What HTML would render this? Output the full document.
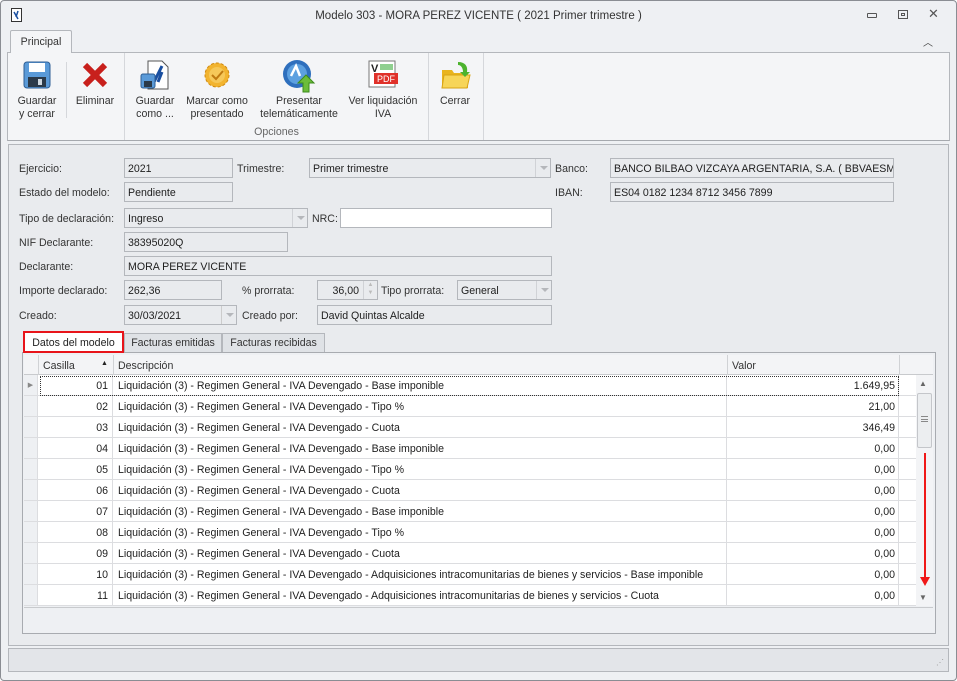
<!DOCTYPE html>
<html><head><meta charset="utf-8"><style>
*{box-sizing:border-box;margin:0;padding:0}
body{width:957px;height:681px;background:#fff;font-family:"Liberation Sans",sans-serif;font-size:10.6px;color:#1e1e1e;position:relative;overflow:hidden}
.abs{position:absolute}
.win{left:0;top:0;width:957px;height:681px;background:#eef0f3;border:1px solid #8a8d93;border-radius:4px}
.lbl{position:absolute;font-size:10.6px;color:#333}
.inp{position:absolute;height:20px;background:#e9ebee;border:1px solid #b4b7bc;padding:3px 3px 1px;font-size:10.6px;line-height:14px;white-space:nowrap;overflow:hidden}
.dd{position:absolute;right:0;top:0;width:15px;height:18px;border-left:1px solid #d0d2d6}
.dd:after{content:"";position:absolute;left:4px;top:7px;border-left:4px solid transparent;border-right:4px solid transparent;border-top:4px solid #b5b7bb}
.btn{position:absolute;text-align:center;font-size:10.6px;line-height:13px;color:#333}
.row{position:absolute;left:24px;width:892px;height:21px;border-bottom:1px solid #dcdde0;background:#fff}
.row div{position:absolute;top:0;height:20px;line-height:22px;font-size:10.6px;white-space:nowrap}
.c0{left:0;width:14px;border-right:1px solid #dcdde0;background:#eef0f3}
.c1{left:14px;width:75px;text-align:right;padding-right:4px;border-right:1px solid #dcdde0}
.c2{left:89px;width:614px;padding-left:5px;border-right:1px solid #dcdde0}
.c3{left:703px;width:172px;text-align:right;padding-right:3px;border-right:1px solid #dcdde0}
.tab{position:absolute;top:333px;height:19px;border:1px solid #b4b7bc;border-bottom:none;background:#dfe2e6;text-align:center;line-height:19px;color:#333}
</style></head><body>
<div class="abs win"></div>
<svg class="abs" style="left:11px;top:8px" width="12" height="14"><rect x="0.5" y="0.5" width="10" height="13" fill="#fff" stroke="#333"/><path d="M3 4l4 7M7 3l-2 6" stroke="#1a4fa0" stroke-width="1.5"/></svg>
<div class="abs" style="left:0;width:957px;top:10px;text-align:center;font-size:11.5px;color:#333">Modelo 303 - MORA PEREZ VICENTE ( 2021 Primer trimestre )</div>
<div class="abs" style="left:867px;top:13px;width:10px;height:5px;border:1px solid #555;border-radius:1px"></div>
<div class="abs" style="left:898px;top:10px;width:10px;height:9px;border:1px solid #555"><div style="margin:2px;height:3px;border:1px solid #555"></div></div>
<div class="abs" style="left:928px;top:6px;font-size:13px;color:#555">✕</div>
<div class="abs" style="left:923px;top:34px;font-size:10px;color:#444">︿</div>
<div class="abs" style="left:7px;top:52px;width:943px;height:89px;background:#f4f5f7;border:1px solid #b4b7bc;border-bottom-color:#a6a9ae"></div>
<div class="abs" style="left:10px;top:30px;width:62px;height:23px;background:#f4f5f7;border:1px solid #b4b7bc;border-bottom:none;border-radius:2px 2px 0 0;text-align:center;line-height:23px;color:#333">Principal</div>
<div class="abs" style="left:124px;top:53px;width:1px;height:87px;background:#d5d7db"></div>
<div class="abs" style="left:428px;top:53px;width:1px;height:87px;background:#d5d7db"></div>
<div class="abs" style="left:483px;top:53px;width:1px;height:87px;background:#d5d7db"></div>
<div class="abs" style="left:66px;top:62px;width:1px;height:56px;background:#d5d7db"></div>
<svg class="abs" style="left:23px;top:61px" width="28" height="28"><rect x="1" y="1" width="26" height="26" rx="3" fill="#5a9ad8" stroke="#2f5f95"/><rect x="6" y="2" width="16" height="9" fill="#fff"/><rect x="5" y="16" width="18" height="10" fill="#2b3a4a"/><rect x="15" y="18" width="4" height="6" fill="#cfd8e0"/></svg>
<svg class="abs" style="left:82px;top:62px" width="26" height="26"><path d="M3 3L23 23M23 3L3 23" stroke="#c8201c" stroke-width="6"/></svg>
<svg class="abs" style="left:140px;top:60px" width="30" height="30"><path d="M8 1h14l6 6v22H8z" fill="#fff" stroke="#555"/><path d="M14 22L22 6M18 22l4-10" stroke="#1a4fa0" stroke-width="3"/><rect x="1" y="14" width="14" height="14" rx="2" fill="#5a9ad8" stroke="#2f5f95"/><rect x="4" y="21" width="8" height="6" fill="#2b3a4a"/></svg>
<svg class="abs" style="left:204px;top:62px" width="26" height="26"><circle cx="13" cy="13" r="12" fill="#f2b430" stroke="#d08a10" stroke-dasharray="3 2"/><circle cx="13" cy="13" r="8" fill="#f6c859"/><path d="M8 13l4 4 7-8" stroke="#c07a10" stroke-width="2" fill="none"/></svg>
<svg class="abs" style="left:282px;top:59px" width="34" height="34"><circle cx="15" cy="15" r="14" fill="#2e6fbd"/><circle cx="15" cy="15" r="10" fill="#5ca0e0"/><path d="M9 17l5-10 4 10" stroke="#fff" stroke-width="2.5" fill="none"/><path d="M24 16l8 8h-5v9h-6v-9h-5z" fill="#6cbd3a" stroke="#3d8a1c"/></svg>
<svg class="abs" style="left:368px;top:60px" width="32" height="30"><rect x="1" y="1" width="26" height="26" fill="#fff" stroke="#777"/><text x="3" y="12" font-size="11" font-weight="bold" font-family="Liberation Sans" fill="#222">V</text><rect x="12" y="4" width="13" height="6" fill="#8fcf8f"/><rect x="6" y="13" width="24" height="11" fill="#e0312a"/><text x="9" y="22" font-size="9" font-family="Liberation Sans" fill="#fff">PDF</text></svg>
<svg class="abs" style="left:440px;top:60px" width="32" height="30"><path d="M2 10h10l2 3h14v15H2z" fill="#e9b41e"/><path d="M4 15h26l-3 13H2z" fill="#f7d558" stroke="#d9a414"/><path d="M18 2c7 0 10 4 9 10l3 0-5 5-5-5h3c0-4-2-7-5-7z" fill="#4cb32e"/></svg>
<div class="btn" style="left:12px;top:95px;width:50px">Guardar<br>y cerrar</div>
<div class="btn" style="left:70px;top:95px;width:50px">Eliminar</div>
<div class="btn" style="left:130px;top:95px;width:50px">Guardar<br>como ...</div>
<div class="btn" style="left:182px;top:95px;width:70px">Marcar como<br>presentado</div>
<div class="btn" style="left:253px;top:95px;width:92px">Presentar<br>telemáticamente</div>
<div class="btn" style="left:343px;top:95px;width:80px">Ver liquidación<br>IVA</div>
<div class="btn" style="left:430px;top:95px;width:50px">Cerrar</div>
<div class="btn" style="left:125px;top:126px;width:303px;color:#666">Opciones</div>
<div class="abs" style="left:8px;top:144px;width:941px;height:502px;border:1px solid #b4b7bc;background:#e9ebee"></div>
<div class="lbl" style="left:19px;top:163px">Ejercicio:</div>
<div class="inp" style="left:124px;top:158px;width:109px">2021</div>
<div class="lbl" style="left:237px;top:163px">Trimestre:</div>
<div class="inp" style="left:309px;top:158px;width:242px">Primer trimestre<div class="dd"></div></div>
<div class="lbl" style="left:555px;top:163px">Banco:</div>
<div class="inp" style="left:610px;top:158px;width:284px">BANCO BILBAO VIZCAYA ARGENTARIA, S.A. ( BBVAESMM</div>
<div class="lbl" style="left:19px;top:187px">Estado del modelo:</div>
<div class="inp" style="left:124px;top:182px;width:109px">Pendiente</div>
<div class="lbl" style="left:555px;top:187px">IBAN:</div>
<div class="inp" style="left:610px;top:182px;width:284px">ES04 0182 1234 8712 3456 7899</div>
<div class="lbl" style="left:19px;top:213px">Tipo de declaración:</div>
<div class="inp" style="left:124px;top:208px;width:184px">Ingreso<div class="dd"></div></div>
<div class="lbl" style="left:312px;top:213px">NRC:</div>
<div class="inp" style="left:340px;top:208px;width:212px;background:#fff"></div>
<div class="lbl" style="left:19px;top:237px">NIF Declarante:</div>
<div class="inp" style="left:124px;top:232px;width:164px">38395020Q</div>
<div class="lbl" style="left:19px;top:261px">Declarante:</div>
<div class="inp" style="left:124px;top:256px;width:428px">MORA PEREZ VICENTE</div>
<div class="lbl" style="left:19px;top:285px">Importe declarado:</div>
<div class="inp" style="left:124px;top:280px;width:98px">262,36</div>
<div class="lbl" style="left:242px;top:285px">% prorrata:</div>
<div class="inp" style="left:317px;top:280px;width:61px;text-align:right;padding-right:18px">36,00<div style="position:absolute;right:0;top:0;width:14px;height:18px;border-left:1px solid #d0d2d6;font-size:6px;line-height:8px;text-align:center;color:#bbb;padding:0">▲<br>▼</div></div>
<div class="lbl" style="left:381px;top:285px">Tipo prorrata:</div>
<div class="inp" style="left:457px;top:280px;width:95px">General<div class="dd"></div></div>
<div class="lbl" style="left:19px;top:310px">Creado:</div>
<div class="inp" style="left:124px;top:305px;width:113px">30/03/2021<div class="dd" style="border-left-color:#ccc"></div></div>
<div class="lbl" style="left:242px;top:310px">Creado por:</div>
<div class="inp" style="left:317px;top:305px;width:235px">David Quintas Alcalde</div>
<div class="tab" style="left:124px;width:98px">Facturas emitidas</div>
<div class="tab" style="left:222px;width:103px">Facturas recibidas</div>
<div class="abs" style="left:22px;top:352px;width:914px;height:282px;border:1px solid #a8abb0;background:#eef0f3"></div>
<div class="tab" style="left:23px;top:331px;width:101px;height:22px;background:#fff;border:2px solid #e8141a;line-height:20px;color:#222">Datos del modelo</div>
<div class="abs" style="left:24px;top:355px;width:909px;height:20px;background:#f3f4f6;border-bottom:1px solid #c8cacd"></div>
<div class="abs" style="left:38px;top:355px;width:1px;height:20px;background:#d0d2d5"></div>
<div class="abs" style="left:113px;top:355px;width:1px;height:20px;background:#d0d2d5"></div>
<div class="abs" style="left:727px;top:355px;width:1px;height:20px;background:#d0d2d5"></div>
<div class="abs" style="left:899px;top:355px;width:1px;height:20px;background:#d0d2d5"></div>
<div class="abs" style="left:43px;top:360px;color:#333">Casilla</div>
<div class="abs" style="left:101px;top:360px;font-size:7px;color:#222">▲</div>
<div class="abs" style="left:118px;top:360px;color:#333">Descripción</div>
<div class="abs" style="left:732px;top:360px;color:#333">Valor</div>
<div class="row" style="top:375px"><div class="c0" style="font-size:7px;color:#888;text-align:center">▶</div><div class="c1">01</div><div class="c2">Liquidación (3) - Regimen General - IVA Devengado - Base imponible</div><div class="c3">1.649,95</div></div>
<div class="row" style="top:396px"><div class="c0"></div><div class="c1">02</div><div class="c2">Liquidación (3) - Regimen General - IVA Devengado - Tipo %</div><div class="c3">21,00</div></div>
<div class="row" style="top:417px"><div class="c0"></div><div class="c1">03</div><div class="c2">Liquidación (3) - Regimen General - IVA Devengado - Cuota</div><div class="c3">346,49</div></div>
<div class="row" style="top:438px"><div class="c0"></div><div class="c1">04</div><div class="c2">Liquidación (3) - Regimen General - IVA Devengado - Base imponible</div><div class="c3">0,00</div></div>
<div class="row" style="top:459px"><div class="c0"></div><div class="c1">05</div><div class="c2">Liquidación (3) - Regimen General - IVA Devengado - Tipo %</div><div class="c3">0,00</div></div>
<div class="row" style="top:480px"><div class="c0"></div><div class="c1">06</div><div class="c2">Liquidación (3) - Regimen General - IVA Devengado - Cuota</div><div class="c3">0,00</div></div>
<div class="row" style="top:501px"><div class="c0"></div><div class="c1">07</div><div class="c2">Liquidación (3) - Regimen General - IVA Devengado - Base imponible</div><div class="c3">0,00</div></div>
<div class="row" style="top:522px"><div class="c0"></div><div class="c1">08</div><div class="c2">Liquidación (3) - Regimen General - IVA Devengado - Tipo %</div><div class="c3">0,00</div></div>
<div class="row" style="top:543px"><div class="c0"></div><div class="c1">09</div><div class="c2">Liquidación (3) - Regimen General - IVA Devengado - Cuota</div><div class="c3">0,00</div></div>
<div class="row" style="top:564px"><div class="c0"></div><div class="c1">10</div><div class="c2">Liquidación (3) - Regimen General - IVA Devengado - Adquisiciones intracomunitarias de bienes y servicios - Base imponible</div><div class="c3">0,00</div></div>
<div class="row" style="top:585px"><div class="c0"></div><div class="c1">11</div><div class="c2">Liquidación (3) - Regimen General - IVA Devengado - Adquisiciones intracomunitarias de bienes y servicios - Cuota</div><div class="c3">0,00</div></div>
<div class="abs" style="left:40px;top:376px;width:859px;height:20px;border:1px dotted #333"></div>
<div class="abs" style="left:916px;top:375px;width:17px;height:231px;background:#f3f4f6"></div>
<div class="abs" style="left:919px;top:379px;font-size:8px;color:#666">▲</div>
<div class="abs" style="left:919px;top:593px;font-size:8px;color:#666">▼</div>
<div class="abs" style="left:917px;top:393px;width:15px;height:55px;border:1px solid #c4c6ca;border-radius:2px;background:#eceef0"></div>
<div class="abs" style="left:921px;top:416px;width:7px;height:6px;border-top:1px solid #888;border-bottom:1px solid #888"><div style="margin-top:2px;border-top:1px solid #888"></div></div>
<div class="abs" style="left:924px;top:453px;width:2px;height:126px;background:#f01818"></div>
<div class="abs" style="left:920px;top:577px;border-left:5px solid transparent;border-right:5px solid transparent;border-top:9px solid #f01818"></div>
<div class="abs" style="left:24px;top:607px;width:909px;height:25px;background:#eef0f3;border-top:1px solid #c8cacd"></div>
<div class="abs" style="left:8px;top:648px;width:941px;height:24px;background:#e3e5e9;border:1px solid #b4b7bc"></div>
<div class="abs" style="left:936px;top:658px;font-size:8px;color:#999;letter-spacing:-1px">⋰</div>
</body></html>
